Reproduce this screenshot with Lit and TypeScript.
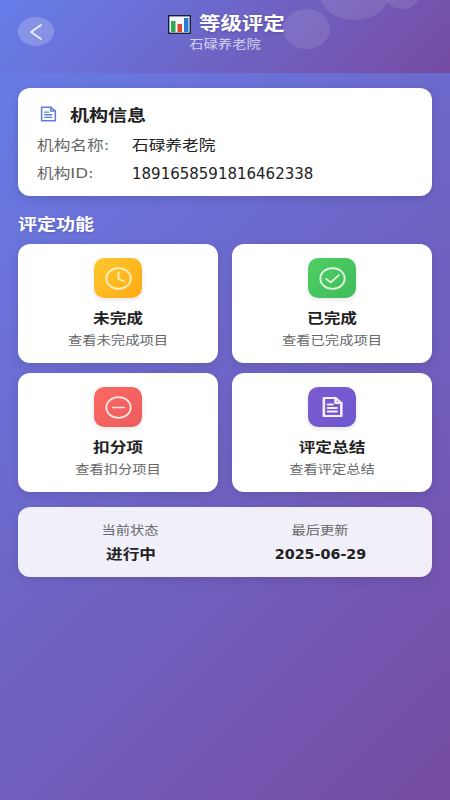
import { LitElement, html, css, svg } from "lit";
import { customElement } from "lit/decorators.js";

const doc = (c: string, w: number, width: number, height: number) => svg`<svg viewBox="0 0 24 24" width="${width}" height="${height}" preserveAspectRatio="none" fill="none" stroke="${c}" stroke-width="${w}" stroke-linejoin="round" stroke-linecap="round"><path d="M5 3h10l5 5v13H5z"/><path d="M15 3v5h5"/><path d="M8.5 9.5h4M8.5 13h7.5M8.5 16.5h7.5"/></svg>`;

const ring = (c: string, inner: unknown) => svg`<svg class="glyph" viewBox="0 0 28 28" width="27" height="23" preserveAspectRatio="none" fill="none" stroke="${c}" stroke-width="2" stroke-linecap="round" stroke-linejoin="round"><circle cx="14" cy="14" r="12.6"/>${inner}</svg>`;

const icons = {
  clock: ring("#fff1bf", svg`<path d="M14 6.5V14.5L20 17.5"/>`),
  check: ring("#e4f7e4", svg`<path d="M7.5 14.5l4.7 4.2L20.5 10"/>`),
  minus: ring("#fde6e4", svg`<path d="M8 14h12"/>`),
  doc: doc("#f3effc", 2.2, 28, 24),
};

const cards = [
  { t: "未完成", d: "查看未完成项目", k: "yellow", i: icons.clock },
  { t: "已完成", d: "查看已完成项目", k: "green", i: icons.check },
  { t: "扣分项", d: "查看扣分项目", k: "red", i: icons.minus },
  { t: "评定总结", d: "查看评定总结", k: "purple", i: icons.doc },
];

@customElement("app-root")
export class AppRoot extends LitElement {
  static styles = css`
    :host {
      display: block;
      width: 450px;
      height: 800px;
      overflow: hidden;
      background: linear-gradient(135deg, #667eea 0%, #764ba2 100%);
      font-family: "DejaVu Sans", "Noto Sans CJK SC", sans-serif;
      color: #222;
    }
    .wc, .wl {
      display: inline-block;
      white-space: nowrap;
      transform: scaleX(1.19);
    }
    .wc { transform-origin: center; }
    .wl { transform-origin: left center; }
    header {
      position: relative;
      height: 73px;
      box-sizing: border-box;
      overflow: hidden;
      background: linear-gradient(135deg, #667eea 0%, #764ba2 100%);
      display: flex;
      flex-direction: column;
      align-items: center;
      padding-top: 12px;
      color: #fff;
    }
    .bubble {
      position: absolute;
      border-radius: 50%;
      background: rgba(255, 255, 255, 0.1);
    }
    .b1 { left: 283px; top: 9px; width: 47px; height: 40px; }
    .b2 { left: 320px; top: -30px; width: 69px; height: 50px; }
    .b3 { left: 385px; top: -18px; width: 34px; height: 27px; }
    .back {
      position: absolute;
      left: 18px;
      top: 17px;
      width: 36px;
      height: 29px;
      border-radius: 50%;
      background: rgba(255, 255, 255, 0.2);
      display: flex;
      align-items: center;
      justify-content: center;
    }
    .title {
      position: relative;
      display: flex;
      align-items: center;
      gap: 8px;
      margin-left: 2px;
      font-size: 18px;
      font-weight: 700;
      line-height: 24px;
      text-shadow: 0 1px 3px rgba(0, 0, 0, 0.2);
    }
    .title .wl { width: 86px; }
    .chart { display: block; }
    .sub {
      position: relative;
      font-size: 12px;
      line-height: 17px;
      margin-top: 1px;
      color: rgba(255, 255, 255, 0.72);
    }
    main {
      padding: 15px 18px 0;
      display: flex;
      flex-direction: column;
    }
    .info {
      height: 108px;
      box-sizing: border-box;
      background: #fff;
      border-radius: 12px;
      box-shadow: 0 3px 10px rgba(0, 0, 0, 0.12);
      padding: 13px 19px 0;
    }
    .info-head {
      display: flex;
      align-items: center;
      gap: 11px;
      height: 26px;
      margin-bottom: 3px;
      font-size: 16px;
      font-weight: 700;
      color: #222;
    }
    .row {
      display: flex;
      height: 28px;
      align-items: center;
      font-size: 14px;
      color: #222;
    }
    .row .k { width: 95px; color: #666; }
    .row .num { margin-top: 4px; font-size: 15px; }
    h2 {
      margin: 17px 0 8px;
      font-size: 16px;
      line-height: 23px;
      font-weight: 700;
      color: #fff;
      text-shadow: 0 1px 2px rgba(0, 0, 0, 0.15);
    }
    .grid {
      display: grid;
      grid-template-columns: 200px 200px;
      grid-auto-rows: 119px;
      column-gap: 14px;
      row-gap: 10px;
    }
    .card {
      background: #fff;
      border-radius: 12px;
      box-shadow: 0 3px 10px rgba(0, 0, 0, 0.1);
      display: flex;
      flex-direction: column;
      align-items: center;
      padding-top: 14px;
      box-sizing: border-box;
    }
    .tile {
      width: 48px;
      height: 40px;
      border-radius: 10px;
      display: flex;
      align-items: center;
      justify-content: center;
      box-shadow: 0 2px 5px rgba(0, 0, 0, 0.1);
    }
    .yellow { background: linear-gradient(135deg, #fdc82f, #ffaa14); }
    .green { background: linear-gradient(135deg, #4fce62, #3fbc5c); }
    .red { background: linear-gradient(135deg, #fa6a62, #ee5b5f); }
    .purple { background: linear-gradient(135deg, #7b5bd0, #6e56cf); }
    .card-t {
      margin-top: 10px;
      font-size: 14px;
      line-height: 20px;
      font-weight: 700;
      color: #222;
    }
    .card-d {
      margin-top: 5px;
      font-size: 12px;
      line-height: 17px;
      color: #666;
    }
    .status {
      margin-top: 15px;
      height: 70px;
      box-sizing: border-box;
      border-radius: 12px;
      background: rgba(255, 255, 255, 0.9);
      box-shadow: 0 3px 10px rgba(0, 0, 0, 0.1);
      display: grid;
      grid-template-columns: 225px 155px;
      padding-top: 16px;
    }
    .st { display: flex; flex-direction: column; align-items: center; }
    .st-k { font-size: 12px; line-height: 17px; color: #666; }
    .st-v { margin-top: 4px; font-size: 14px; line-height: 20px; font-weight: 700; color: #222; }
    .date { font-size: 14.3px; }
  `;

  render() {
    return html`
      <header>
        <div class="bubble b1"></div>
        <div class="bubble b2"></div>
        <div class="bubble b3"></div>
        <div class="back">
          <svg width="14" height="18" viewBox="0 0 14 18" fill="none" stroke="#f1f1fb" stroke-width="1.7" stroke-linecap="round" stroke-linejoin="round"><path d="M12 2L2 9l10 7"/></svg>
        </div>
        <div class="title">
          <svg class="chart" width="23" height="19" viewBox="0 0 23 19">
            <rect x="0.7" y="0.7" width="21.6" height="17.6" fill="#f4f6fa" stroke="#14213d" stroke-width="1.4"/>
            <rect x="3" y="6" width="4.5" height="11" fill="#2fa84f"/>
            <rect x="9.5" y="9" width="4.5" height="8" fill="#e0452b"/>
            <rect x="16" y="3" width="4.5" height="14" fill="#2a7bd6"/>
          </svg>
          <span class="wl">等级评定</span>
        </div>
        <div class="sub"><span class="wc">石碌养老院</span></div>
      </header>
      <main>
        <section class="info">
          <div class="info-head">${doc("#5b82d8", 1.7, 22, 18)}<span class="wl">机构信息</span></div>
          <div class="row"><span class="k"><span class="wl">机构名称:</span></span><span class="wl">石碌养老院</span></div>
          <div class="row"><span class="k"><span class="wl">机构ID:</span></span><span class="num">1891658591816462338</span></div>
        </section>
        <h2><span class="wl">评定功能</span></h2>
        <section class="grid">
          ${cards.map(
            (c) => html`<div class="card">
              <div class="tile ${c.k}">${c.i}</div>
              <div class="card-t"><span class="wc">${c.t}</span></div>
              <div class="card-d"><span class="wc">${c.d}</span></div>
            </div>`
          )}
        </section>
        <section class="status">
          <div class="st"><span class="st-k wc">当前状态</span><span class="st-v wc">进行中</span></div>
          <div class="st"><span class="st-k wc">最后更新</span><span class="st-v date">2025-06-29</span></div>
        </section>
      </main>
    `;
  }
}
